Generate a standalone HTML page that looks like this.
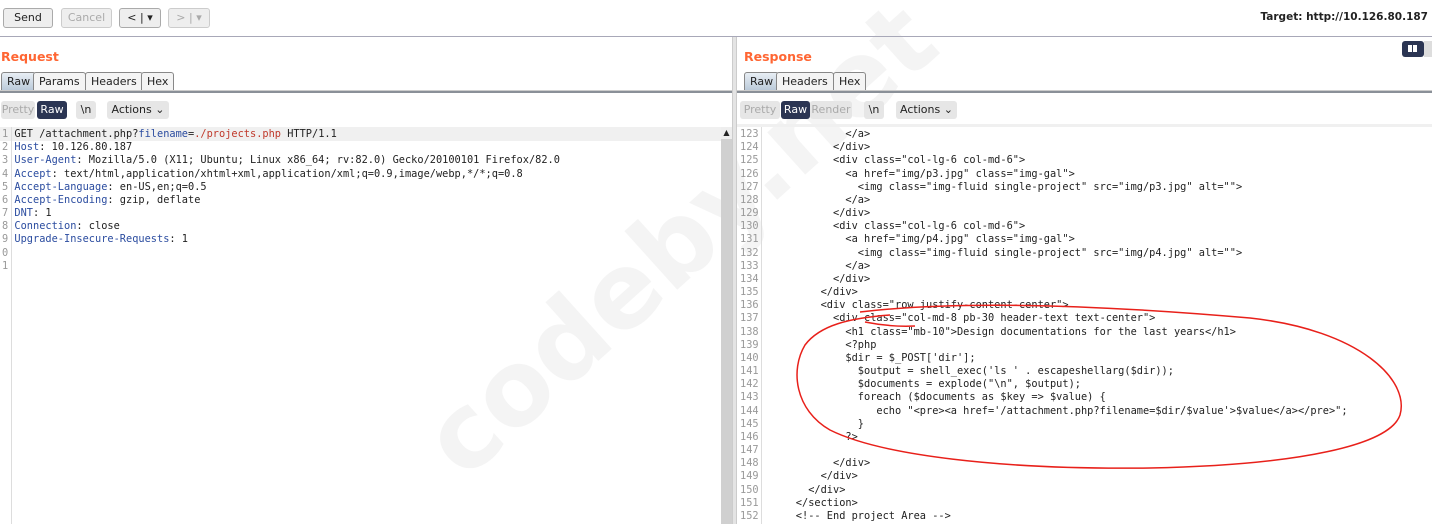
<!DOCTYPE html>
<html><head><style>
*{margin:0;padding:0;box-sizing:border-box}
body{width:1432px;height:524px;overflow:hidden;background:#fff;font-family:"DejaVu Sans","Liberation Sans",sans-serif;font-size:11px;color:#222;position:relative}
.btn{position:absolute;top:8px;height:20px;border:1px solid #aaa;border-radius:3px;background:#eee;font-size:11px;line-height:18px;text-align:center}
.dis{color:#aaa;border-color:#ccc}
.hsep{position:absolute;left:0;top:36px;width:1432px;height:1px;background:#a8a8b8}
.title{position:absolute;top:49px;font-size:12.5px;font-weight:bold;color:#ff6633}
.tab{position:absolute;top:72px;height:19px;border:1px solid #888;border-bottom:none;border-radius:3px 3px 0 0;background:#f4f4f4;font-size:11px;line-height:17px;padding:0 5px}
.tab.act{background:linear-gradient(#e8eef4,#b8c8d8)}
.tabline{position:absolute;top:90px;height:3px;background:#8a9098;border-top:1px solid #ccc}
.tb{position:absolute;top:101px;height:18px;border-radius:3px;background:#e6e6e6;font-size:11px;line-height:18px;text-align:center;color:#222}
.tb.g{color:#aaa}
.tb.d{background:#2b3553;color:#fff}
.code{position:absolute;font-family:"DejaVu Sans Mono","Liberation Mono",monospace;font-size:10.3px;line-height:13.17px;white-space:pre}
.ln{color:#999}
.k{color:#2c4da0}
.r{color:#c0392b}
</style></head><body>
<div style="position:absolute;left:440px;top:455px;font-size:104px;font-weight:bold;color:rgba(0,0,0,0.045);transform:rotate(-42deg);transform-origin:0 50%;white-space:nowrap;line-height:104px;margin-top:-52px">codeby.net</div>

<div class="btn" style="left:3px;width:50px">Send</div>
<div class="btn dis" style="left:61px;width:51px">Cancel</div>
<div class="btn" style="left:119px;width:42px">&lt; | ▾</div>
<div class="btn dis" style="left:168px;width:42px">&gt; | ▾</div>
<div style="position:absolute;right:4px;top:11px;font-size:10.5px;font-weight:bold;color:#222;white-space:nowrap">Target: http://10.126.80.187</div>
<div class="hsep"></div>
<div style="position:absolute;left:1402px;top:41px;width:22px;height:16px;background:#2b3553;border-radius:3px"><div style="position:absolute;left:6px;top:4px;width:4px;height:7px;background:#fff"></div><div style="position:absolute;left:11px;top:4px;width:4px;height:7px;background:#fff"></div></div>
<div style="position:absolute;left:1424px;top:41px;width:8px;height:16px;background:#ddd"></div>

<div style="position:absolute;left:732px;top:37px;width:5px;height:487px;background:#e4e4e4;border-left:1px solid #ccc;border-right:1px solid #ccc"></div>

<div class="title" style="left:1px">Request</div>
<div class="tab act" style="left:1px">Raw</div>
<div class="tab" style="left:33px">Params</div>
<div class="tab" style="left:85px">Headers</div>
<div class="tab" style="left:141px">Hex</div>
<div class="tabline" style="left:0;width:732px"></div>
<div class="tb g" style="left:1px;width:34px">Pretty</div>
<div class="tb d" style="left:37px;width:30px">Raw</div>
<div class="tb" style="left:76px;width:20px">\n</div>
<div class="tb" style="left:107px;width:62px">Actions ⌄</div>
<div style="position:absolute;left:0;top:127px;width:722px;height:14px;background:#f0f0f0"></div>
<div style="position:absolute;left:11px;top:127px;width:1px;height:397px;background:#ddd"></div>
<div style="position:absolute;left:721px;top:127px;width:11px;height:397px;background:#d0d0d0"></div>
<div style="position:absolute;left:721px;top:127px;width:11px;height:12px;background:#eee;font-size:8px;text-align:center;line-height:12px">▲</div>
<div class="code" style="left:2px;top:128px"><span class="ln">1</span> GET /attachment.php?<span class="k">filename</span>=<span class="r">./projects.php</span> HTTP/1.1
<span class="ln">2</span> <span class="k">Host</span>: 10.126.80.187
<span class="ln">3</span> <span class="k">User-Agent</span>: Mozilla/5.0 (X11; Ubuntu; Linux x86_64; rv:82.0) Gecko/20100101 Firefox/82.0
<span class="ln">4</span> <span class="k">Accept</span>: text/html,application/xhtml+xml,application/xml;q=0.9,image/webp,*/*;q=0.8
<span class="ln">5</span> <span class="k">Accept-Language</span>: en-US,en;q=0.5
<span class="ln">6</span> <span class="k">Accept-Encoding</span>: gzip, deflate
<span class="ln">7</span> <span class="k">DNT</span>: 1
<span class="ln">8</span> <span class="k">Connection</span>: close
<span class="ln">9</span> <span class="k">Upgrade-Insecure-Requests</span>: 1
<span class="ln">0</span>
<span class="ln">1</span></div>

<div class="title" style="left:744px">Response</div>
<div class="tab act" style="left:744px">Raw</div>
<div class="tab" style="left:776px">Headers</div>
<div class="tab" style="left:833px">Hex</div>
<div class="tabline" style="left:737px;width:695px"></div>
<div class="tb g" style="left:740px;width:40px">Pretty</div>
<div class="tb d" style="left:781px;width:29px">Raw</div>
<div class="tb g" style="left:810px;width:42px">Render</div>
<div class="tb" style="left:864px;width:20px">\n</div>
<div class="tb" style="left:896px;width:61px">Actions ⌄</div>
<div style="position:absolute;left:737px;top:124px;width:695px;height:3px;background:#f0f0f0"></div>
<div style="position:absolute;left:761px;top:127px;width:1px;height:397px;background:#ddd"></div>
<div class="code" style="left:740px;top:128px"><span class="ln">123</span>              &lt;/a&gt;
<span class="ln">124</span>            &lt;/div&gt;
<span class="ln">125</span>            &lt;div class="col-lg-6 col-md-6"&gt;
<span class="ln">126</span>              &lt;a href="img/p3.jpg" class="img-gal"&gt;
<span class="ln">127</span>                &lt;img class="img-fluid single-project" src="img/p3.jpg" alt=""&gt;
<span class="ln">128</span>              &lt;/a&gt;
<span class="ln">129</span>            &lt;/div&gt;
<span class="ln">130</span>            &lt;div class="col-lg-6 col-md-6"&gt;
<span class="ln">131</span>              &lt;a href="img/p4.jpg" class="img-gal"&gt;
<span class="ln">132</span>                &lt;img class="img-fluid single-project" src="img/p4.jpg" alt=""&gt;
<span class="ln">133</span>              &lt;/a&gt;
<span class="ln">134</span>            &lt;/div&gt;
<span class="ln">135</span>          &lt;/div&gt;
<span class="ln">136</span>          &lt;div class="row justify-content-center"&gt;
<span class="ln">137</span>            &lt;div class="col-md-8 pb-30 header-text text-center"&gt;
<span class="ln">138</span>              &lt;h1 class="mb-10"&gt;Design documentations for the last years&lt;/h1&gt;
<span class="ln">139</span>              &lt;?php
<span class="ln">140</span>              $dir = $_POST['dir'];
<span class="ln">141</span>                $output = shell_exec('ls ' . escapeshellarg($dir));
<span class="ln">142</span>                $documents = explode("\n", $output);
<span class="ln">143</span>                foreach ($documents as $key =&gt; $value) {
<span class="ln">144</span>                   echo "&lt;pre&gt;&lt;a href='/attachment.php?filename=$dir/$value'&gt;$value&lt;/a&gt;&lt;/pre&gt;";
<span class="ln">145</span>                }
<span class="ln">146</span>              ?&gt;
<span class="ln">147</span>
<span class="ln">148</span>            &lt;/div&gt;
<span class="ln">149</span>          &lt;/div&gt;
<span class="ln">150</span>        &lt;/div&gt;
<span class="ln">151</span>      &lt;/section&gt;
<span class="ln">152</span>      &lt;!-- End project Area --&gt;</div>

<svg style="position:absolute;left:0;top:0" width="1432" height="524">
<path d="M860 312 C960 300 1100 305 1250 318 C1360 330 1410 380 1400 415 C1390 445 1300 465 1150 468 C1000 470 880 455 830 430 C795 410 790 370 805 345 C820 325 850 318 890 315" fill="none" stroke="#e8201a" stroke-width="1.5"/>
<path d="M865 322 C880 325 895 327 915 326" fill="none" stroke="#e8201a" stroke-width="1.5"/>
</svg>
</body></html>
